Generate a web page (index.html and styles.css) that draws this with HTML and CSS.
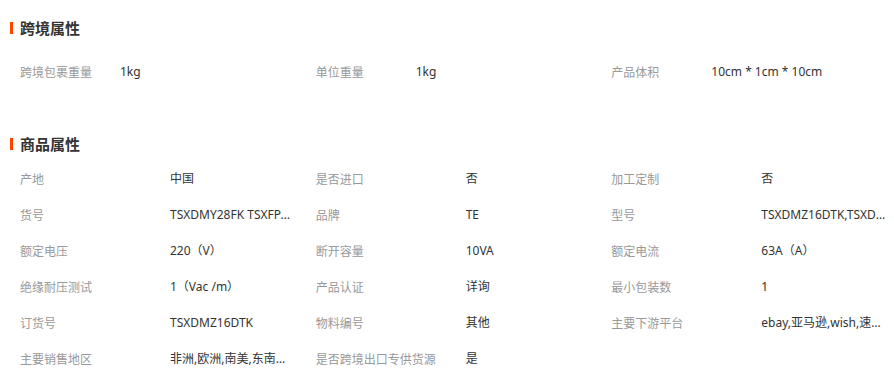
FILE: index.html
```html
<!DOCTYPE html>
<html lang="zh-CN">
<head>
<meta charset="utf-8">
<link rel="stylesheet" href="styles.css">
</head>
<body>
<div class="page">
  <section class="section section-cross">
    <h2 class="title"><span class="bar"></span>跨境属性</h2>
    <div class="grid grid-cross">
      <div class="item"><span class="label">跨境包裹重量</span><span class="value">1kg</span></div>
      <div class="item"><span class="label">单位重量</span><span class="value">1kg</span></div>
      <div class="item"><span class="label">产品体积</span><span class="value">10cm * 1cm * 10cm</span></div>
    </div>
  </section>
  <section class="section section-goods">
    <h2 class="title"><span class="bar"></span>商品属性</h2>
    <div class="grid grid-goods">
      <div class="item"><span class="label">产地</span><span class="value">中国</span></div>
      <div class="item"><span class="label">是否进口</span><span class="value">否</span></div>
      <div class="item"><span class="label">加工定制</span><span class="value">否</span></div>
      <div class="item"><span class="label">货号</span><span class="value">TSXDMY28FK TSXFPACC02 TSXFPACC04</span></div>
      <div class="item"><span class="label">品牌</span><span class="value">TE</span></div>
      <div class="item"><span class="label">型号</span><span class="value">TSXDMZ16DTK,TSXDMZ28DTK</span></div>
      <div class="item"><span class="label">额定电压</span><span class="value">220（V）</span></div>
      <div class="item"><span class="label">断开容量</span><span class="value">10VA</span></div>
      <div class="item"><span class="label">额定电流</span><span class="value">63A（A）</span></div>
      <div class="item"><span class="label">绝缘耐压测试</span><span class="value">1（Vac /m）</span></div>
      <div class="item"><span class="label">产品认证</span><span class="value">详询</span></div>
      <div class="item"><span class="label">最小包装数</span><span class="value">1</span></div>
      <div class="item"><span class="label">订货号</span><span class="value">TSXDMZ16DTK</span></div>
      <div class="item"><span class="label">物料编号</span><span class="value">其他</span></div>
      <div class="item"><span class="label">主要下游平台</span><span class="value">ebay,亚马逊,wish,速卖通,独立站</span></div>
      <div class="item"><span class="label">主要销售地区</span><span class="value">非洲,欧洲,南美,东南亚,北美</span></div>
      <div class="item"><span class="label">是否跨境出口专供货源</span><span class="value">是</span></div>
    </div>
  </section>
</div>
</body>
</html>
```

FILE: styles.css
```css
html, body {
  margin: 0;
  padding: 0;
  background: #fff;
}
body {
  font-family: "Noto Sans", "Noto Sans CJK SC", sans-serif;
  font-size: 12px;
  color: #333;
  overflow: hidden;
}
.page {
  padding-top: 18px;
  width: 894px;
}
.section-goods {
  margin-top: 44px;
}
.title {
  display: flex;
  align-items: center;
  margin: 0;
  padding-left: 10px;
  height: 20px;
  line-height: 20px;
  font-size: 15px;
  font-weight: bold;
  color: #333;
  font-family: "Noto Sans CJK SC", sans-serif;
}
.bar {
  display: block;
  width: 3px;
  height: 12px;
  background: #ff4400;
  margin-right: 7px;
}
.grid {
  display: grid;
  grid-template-columns: repeat(3, 295.67px);
}
.grid-cross {
  margin-top: 16px;
}
.grid-goods {
  margin-top: 7px;
}
.item {
  display: flex;
  height: 36px;
  line-height: 36px;
  padding-left: 20px;
  white-space: nowrap;
  min-width: 0;
  overflow: hidden;
}
.label {
  color: #999;
  font-family: "Noto Sans CJK SC", sans-serif;
  flex: none;
}
.grid-cross .label {
  width: 100px;
}
.grid-goods .label {
  width: 150px;
}
.value {
  color: #333;
  overflow: hidden;
  text-overflow: ellipsis;
  max-width: 129px;
}
.grid-cross .value {
  max-width: 170px;
}
```
